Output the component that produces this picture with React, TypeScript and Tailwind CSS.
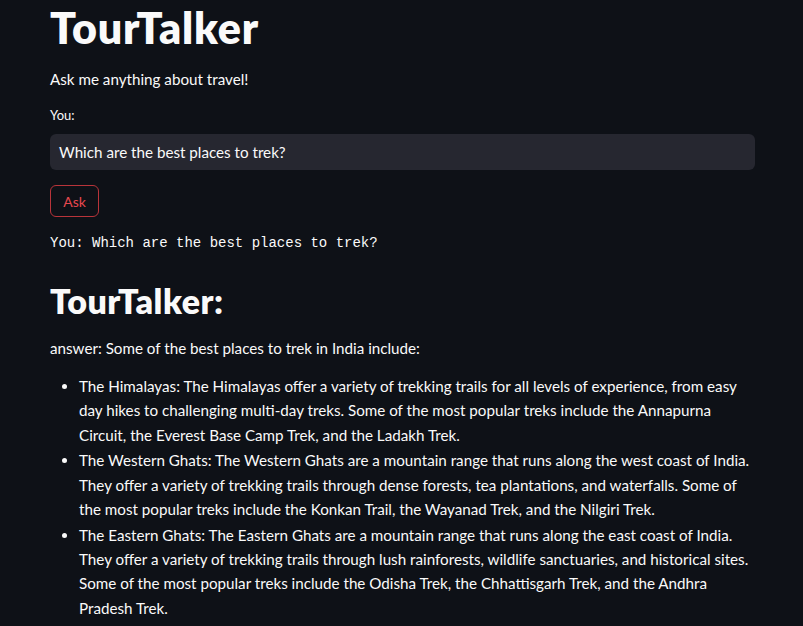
const items = [
  {
    title: 'The Himalayas',
    text: 'The Himalayas offer a variety of trekking trails for all levels of experience, from easy day hikes to challenging multi-day treks. Some of the most popular treks include the Annapurna Circuit, the Everest Base Camp Trek, and the Ladakh Trek.',
  },
  {
    title: 'The Western Ghats',
    text: 'The Western Ghats are a mountain range that runs along the west coast of India. They offer a variety of trekking trails through dense forests, tea plantations, and waterfalls. Some of the most popular treks include the Konkan Trail, the Wayanad Trek, and the Nilgiri Trek.',
  },
  {
    title: 'The Eastern Ghats',
    text: 'The Eastern Ghats are a mountain range that runs along the east coast of India. They offer a variety of trekking trails through lush rainforests, wildlife sanctuaries, and historical sites. Some of the most popular treks include the Odisha Trek, the Chhattisgarh Trek, and the Andhra Pradesh Trek.',
  },
];

export default function App() {
  return (
    <div className="min-h-[626px] bg-[#0e1117] text-[#fafafa] font-['Lato','Noto_Sans',sans-serif]">
      <main className="w-[705px] ml-[50px] pt-[5px]">
        <h1 className="text-[43px] font-extrabold leading-[46px] tracking-[0.8px]">TourTalker</h1>

        <p className="mt-[16px] text-[15.2px] leading-[24px]">Ask me anything about travel!</p>

        <label className="mt-[15px] block text-[13px] leading-[18px]">You:</label>
        <div className="mt-[10px] flex h-[36px] items-center rounded-md bg-[#262730] px-[9px] text-[15.2px]">
          Which are the best places to trek?
        </div>

        <button className="mt-[15px] flex h-[32px] w-[49px] items-center justify-center rounded-md border border-[#b8343a] text-[14px] text-[#e8484f]">
          Ask
        </button>

        <pre className="mt-[16px] font-['Liberation_Mono',monospace] text-[14px] leading-[20px]">
          You: Which are the best places to trek?
        </pre>

        <h2 className="mt-[28px] text-[34px] font-extrabold leading-[40px] tracking-[0.5px]">TourTalker:</h2>

        <p className="mt-[15px] text-[15.2px] leading-[24px]">answer: Some of the best places to trek in India include:</p>

        <ul className="mt-[14px] list-disc pl-[29px] text-[15.2px] leading-[24.3px]">
          {items.map((item) => (
            <li key={item.title} className="mt-[1.5px] marker:text-[#fafafa]">
              {item.title}: {item.text}
            </li>
          ))}
        </ul>
      </main>
    </div>
  );
}
